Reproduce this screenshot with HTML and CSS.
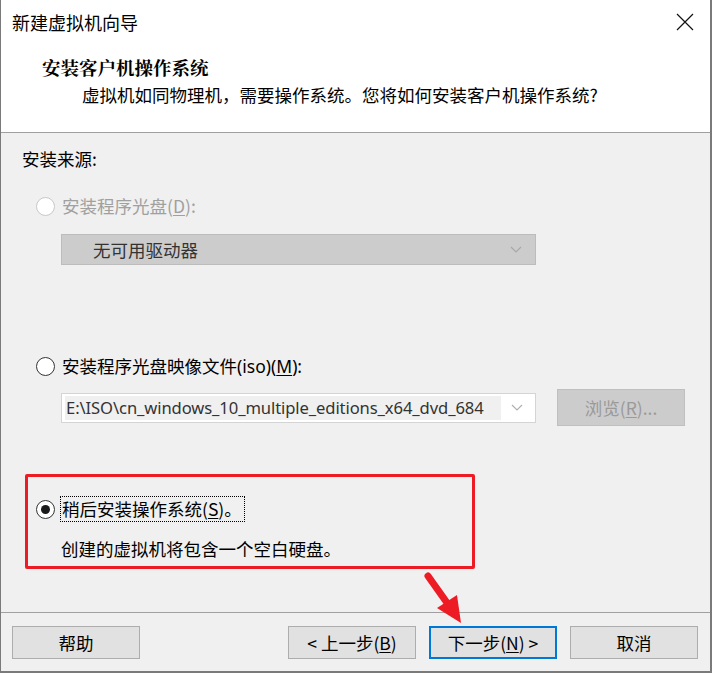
FILE: index.html
```html
<!DOCTYPE html>
<html lang="zh-CN">
<head>
<meta charset="utf-8">
<title>新建虚拟机向导</title>
<link rel="stylesheet" href="styles.css">
</head>
<body>
<div class="window">
  <div class="titlebar">
    <span class="title">新建虚拟机向导</span>
    <svg class="close" width="18" height="18" viewBox="0 0 18 18"><path d="M1 1 L17 17 M17 1 L1 17" stroke="#111" stroke-width="1.2" fill="none"/></svg>
  </div>
  <div class="header">
    <div class="h-title">安装客户机操作系统</div>
    <div class="h-sub">虚拟机如同物理机，需要操作系统。您将如何安装客户机操作系统?</div>
  </div>
  <div class="body">
    <div class="section-label">安装来源:</div>

    <div class="radio-row disabled r1">
      <span class="radio"></span>
      <span class="label">安装程序光盘(<u>D</u>):</span>
    </div>
    <div class="select disabled-select">
      <span class="sel-text">无可用驱动器</span>
      <svg class="chev" width="12" height="8" viewBox="0 0 12 8"><path d="M1 1 L6 6 L11 1" stroke="#a8a8a8" stroke-width="1.2" fill="none"/></svg>
    </div>

    <div class="radio-row r2">
      <span class="radio"></span>
      <span class="label">安装程序光盘映像文件<span class="lat">(iso)(<u>M</u>):</span></span>
    </div>
    <div class="combo-row">
      <div class="combo">
        <span class="combo-text">E:\ISO\cn_windows_10_multiple_editions_x64_dvd_684</span>
        <svg class="chev" width="12" height="8" viewBox="0 0 12 8"><path d="M1 1 L6 6 L11 1" stroke="#b0b0b0" stroke-width="1.2" fill="none"/></svg>
      </div>
      <div class="browse">浏览(<u>R</u>)...</div>
    </div>

    <div class="mark-box">
      <div class="radio-row r3">
        <span class="radio checked"></span>
        <span class="label focus">稍后安装操作系统(<u>S</u>)。</span>
      </div>
      <div class="desc">创建的虚拟机将包含一个空白硬盘。</div>
    </div>
  </div>
  <div class="footer">
    <div class="btn">帮助</div>
    <div class="spacer"></div>
    <div class="btn">&lt;&nbsp;上一步(<u>B</u>)</div>
    <div class="btn primary">下一步(<u>N</u>)&nbsp;&gt;</div>
    <div class="btn">取消</div>
  </div>
  <svg class="arrow" width="712" height="673" viewBox="0 0 712 673">
    <line x1="428" y1="576" x2="450" y2="607" stroke="#ed1c24" stroke-width="7" stroke-linecap="round"/>
    <polygon points="461,623 437,608 457,595" fill="#ed1c24"/>
  </svg>
</div>
</body>
</html>
```
FILE: styles.css
```css
* { box-sizing: border-box; }
html, body { margin: 0; padding: 0; }
body {
  width: 712px;
  height: 673px;
  overflow: hidden;
  font-family: "Noto Sans", "Noto Sans CJK SC", sans-serif;
  font-size: 17px;
  color: #000;
}
u { text-decoration: underline; text-underline-offset: 2px; }

.window {
  position: relative;
  width: 712px;
  height: 673px;
  border-left: 1px solid #7a7a7a;
  border-right: 2px solid #7a7a7a;
  border-bottom: 2px solid #7a7a7a;
  display: flex;
  flex-direction: column;
  background: #f0f0f0;
}

.titlebar {
  height: 44px;
  background: #fff;
  display: flex;
  align-items: center;
  justify-content: space-between;
  padding: 0 16px 0 11px;
}
.title { font-size: 18px; line-height: 24px; font-family: "Noto Sans CJK SC", sans-serif; }
.close { display: block; }

.header {
  height: 89px;
  background: #fff;
  border-bottom: 1px solid #a0a0a0;
  padding: 11px 0 0 41px;
}
.h-title {
  font-family: "Noto Serif CJK SC", "Noto Sans CJK SC", serif;
  font-weight: bold;
  font-size: 18.5px;
  line-height: 24px;
}
.h-sub {
  font-family: "Noto Sans CJK SC", sans-serif;
  font-size: 17.5px;
  line-height: 24px;
  margin: 4px 0 0 40px;
}

.body {
  flex: 1;
  padding: 14px 0 0 0;
  border-bottom: 1px solid #a0a0a0;
}
.section-label {
  margin-left: 21px;
  line-height: 24px;
  font-family: "Noto Sans CJK SC", sans-serif;
  font-size: 17.5px;
}

.radio-row {
  display: flex;
  align-items: center;
  height: 24px;
  margin-left: 35px;
}
.radio {
  width: 19px;
  height: 19px;
  border-radius: 50%;
  border: 1px solid #333;
  background: #fff;
  flex: none;
  position: relative;
}
.radio.checked::after {
  content: "";
  position: absolute;
  left: 4px; top: 4px;
  width: 9px; height: 9px;
  border-radius: 50%;
  background: #1a1a1a;
}
.label {
  margin-left: 7px;
  font-family: "Noto Sans CJK SC", sans-serif;
  font-size: 17.5px;
  line-height: 24px;
  white-space: nowrap;
}
.lat { font-family: "Noto Sans", sans-serif; }
.disabled .radio { border-color: #c8c8c8; }
.disabled .label { color: #a0a0a0; }

.r1 { margin-top: 23px; }
.select {
  margin: 16px 0 0 60px;
  width: 475px;
  height: 31px;
  display: flex;
  align-items: center;
  justify-content: space-between;
  padding: 0 13px 0 31px;
}
.disabled-select {
  background: #cccccc;
  border: 1px solid #bcbcbc;
}
.sel-text {
  font-family: "Noto Sans CJK SC", sans-serif;
  font-size: 17.5px;
  color: #333;
}
.chev { display: block; }

.r2 { margin-top: 89px; }
.combo-row {
  display: flex;
  align-items: center;
  margin: 11px 0 0 60px;
}
.combo {
  width: 475px;
  height: 30px;
  background: #fff;
  border: 1px solid #d4d4d4;
  display: flex;
  align-items: center;
  padding: 2px 12px 2px 3px;
}
.combo-text {
  flex: 1;
  height: 100%;
  overflow: hidden;
  white-space: nowrap;
  background: #f0f0f0;
  font-family: "Noto Sans", sans-serif;
  font-size: 16.6px;
  letter-spacing: -0.1px;
  line-height: 24px;
  color: #333;
  margin-right: 10px;
  padding-left: 1px;
}
.browse {
  margin-left: 21px;
  width: 128px;
  height: 37px;
  background: #cccccc;
  border: 1px solid #bfbfbf;
  color: #9a9a9a;
  display: flex;
  align-items: center;
  justify-content: center;
  font-family: "Noto Sans CJK SC", sans-serif;
  font-size: 17.5px;
}

.mark-box {
  margin: 48px 0 0 24px;
  width: 450px;
  height: 95px;
  border: 3px solid #ed1c24;
  border-radius: 2px;
  padding-top: 20px;
}
.mark-box .radio-row { margin-left: 8px; }
.focus {
  outline: 1px dotted #000;
  outline-offset: 0;
  margin-left: 6px;
  padding: 0 2px 0 1px;
}
.desc {
  margin: 16px 0 0 33px;
  line-height: 24px;
  font-family: "Noto Sans CJK SC", sans-serif;
  font-size: 17.5px;
}

.footer {
  height: 58px;
  display: flex;
  align-items: flex-start;
  padding: 13px 12px 0 11px;
  gap: 13px;
}
.spacer { flex: 1; }
.btn {
  width: 128px;
  height: 33px;
  background: #e1e1e1;
  border: 1px solid #adadad;
  display: flex;
  align-items: center;
  justify-content: center;
  font-family: "Noto Sans CJK SC", sans-serif;
  font-size: 17.5px;
  white-space: nowrap;
}
.btn.primary { border: 2px solid #0078d7; }

.arrow {
  position: absolute;
  left: -1px;
  top: 0;
  pointer-events: none;
}
```
